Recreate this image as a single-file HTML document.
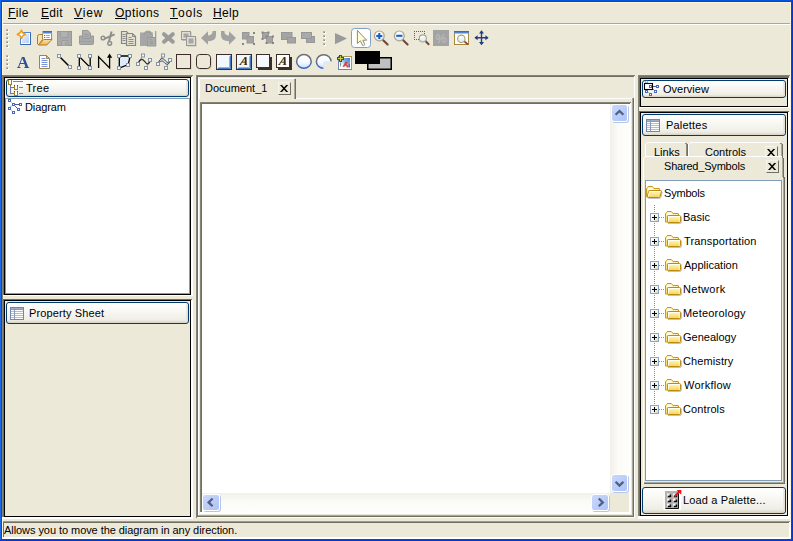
<!DOCTYPE html>
<html>
<head>
<meta charset="utf-8">
<title>Diagram Editor</title>
<style>
html,body{margin:0;padding:0;}
body{width:793px;height:541px;overflow:hidden;background:#ece9d8;position:relative;
 font-family:"Liberation Sans",sans-serif;font-size:11px;color:#000;}
#w{position:absolute;left:0;top:0;width:793px;height:541px;overflow:hidden;background:#ece9d8;}
#w div,#w span,#w svg{position:absolute;}
.t{white-space:nowrap;font:11px/13px "Liberation Sans",sans-serif;color:#000;}
.m{white-space:nowrap;font:12px/14px "Liberation Sans",sans-serif;color:#000;top:6px;}
.m u{text-decoration:none;border-bottom:1px solid #000;display:inline-block;line-height:9px;position:static;}
.g1{background:#858374;}
.g2{background:#716f64;}
.k{background:#000;}
.wh{background:#fff;}
.btn{border:1px solid #003c74;border-radius:3px;box-sizing:border-box;
 background:linear-gradient(#fff 0%,#fdfdfb 15%,#f4f3ee 60%,#eeede5 85%,#e3e0d3 93%,#d6d0c5 100%);}
.btn:after{content:"";position:absolute;right:0;top:1px;bottom:1px;width:2px;background:linear-gradient(90deg,rgba(230,226,212,.5),rgba(220,215,200,.8));}
.sbb{width:17px;height:17px;box-sizing:border-box;border:1px solid #fff;border-radius:3px;background:linear-gradient(135deg,#cbd8fb,#bccdf8 50%,#aec3f5);box-shadow:1px 1px 0 #b5c6ea;}
.lb{border:1px solid #7f9db9;background:#fff;box-sizing:border-box;}
.cb{width:13px;height:13px;box-sizing:border-box;border-top:1px solid #f7f5ea;border-left:1px solid #f7f5ea;border-right:1px solid #716f64;border-bottom:1px solid #716f64;}
</style>
</head>
<body>
<div id="w">

<!-- window frame -->
<div style="left:0;top:0;width:793px;height:1px;background:#0654dc"></div>
<div style="left:0;top:1px;width:793px;height:1px;background:#0342ce"></div>
<div style="left:0;top:0;width:1px;height:541px;background:#1a6aee"></div>
<div style="left:1px;top:1px;width:1px;height:540px;background:#0448d8"></div>
<div style="left:791px;top:1px;width:1px;height:540px;background:#0642e6"></div>
<div style="left:792px;top:0;width:1px;height:541px;background:#0338d2"></div>
<div style="left:1px;top:539px;width:791px;height:1px;background:#0844e6"></div>
<div style="left:0;top:540px;width:793px;height:1px;background:#0338d4"></div>
<div style="left:2px;top:2px;width:1px;height:537px;background:#fdf5d8"></div>
<div style="left:790px;top:2px;width:1px;height:537px;background:#fdf5d8"></div>
<div style="left:2px;top:2px;width:789px;height:1px;background:#fdf5d8"></div>

<!-- menu bar -->
<span class="m" style="left:8px;letter-spacing:.35px"><u>F</u>ile</span>
<span class="m" style="left:41px;letter-spacing:.3px"><u>E</u>dit</span>
<span class="m" style="left:74px;letter-spacing:.8px"><u>V</u>iew</span>
<span class="m" style="left:115px;letter-spacing:.45px"><u>O</u>ptions</span>
<span class="m" style="left:170px;letter-spacing:.75px"><u>T</u>ools</span>
<span class="m" style="left:213px;letter-spacing:.3px"><u>H</u>elp</span>
<div style="left:3px;top:23px;width:787px;height:1px;background:#aca899"></div>
<div style="left:3px;top:24px;width:787px;height:1px;background:#fff"></div>

<!-- TOOLBARS -->
<svg style="left:0;top:25px;opacity:.999" width="793" height="50" viewBox="0 25 793 50">
<defs>
<linearGradient id="gpage" x1="0" y1="0" x2="1" y2="1"><stop offset="0" stop-color="#e6f0fd"/><stop offset="1" stop-color="#b4d0f6"/></linearGradient>
<radialGradient id="gstar"><stop offset="0" stop-color="#fff"/><stop offset=".5" stop-color="#fffbe0"/><stop offset="1" stop-color="#fbc04a"/></radialGradient>
<linearGradient id="gfold" x1="0" y1="0" x2="0" y2="1"><stop offset="0" stop-color="#fbe3a4"/><stop offset="1" stop-color="#eab556"/></linearGradient>
<linearGradient id="glens" x1="0" y1="0" x2="0" y2="1"><stop offset="0" stop-color="#ffffff"/><stop offset="1" stop-color="#dfe6f2"/></linearGradient>
<linearGradient id="gell" x1="0" y1="0" x2="0" y2="1"><stop offset="0" stop-color="#ffffff"/><stop offset=".6" stop-color="#f4f9ff"/><stop offset="1" stop-color="#c4daf8"/></linearGradient>
<linearGradient id="gells" x1="0" y1="0" x2="0" y2="1"><stop offset="0" stop-color="#707070"/><stop offset=".5" stop-color="#5c6c8c"/><stop offset="1" stop-color="#3a6ac6"/></linearGradient>
<linearGradient id="gtitle" x1="0" y1="0" x2="0" y2="1"><stop offset="0" stop-color="#2f62b0"/><stop offset="1" stop-color="#6f9bdc"/></linearGradient>
</defs>
<!-- grips -->
<g fill="#fff"><rect x="7" y="30" width="2" height="2"/><rect x="7" y="34" width="2" height="2"/><rect x="7" y="38" width="2" height="2"/><rect x="7" y="42" width="2" height="2"/><rect x="7" y="46" width="2" height="2"/>
<rect x="7" y="56" width="2" height="2"/><rect x="7" y="60" width="2" height="2"/><rect x="7" y="64" width="2" height="2"/><rect x="7" y="68" width="2" height="2"/>
<rect x="324" y="32" width="2" height="2"/><rect x="324" y="36" width="2" height="2"/><rect x="324" y="40" width="2" height="2"/><rect x="324" y="44" width="2" height="2"/></g>
<g fill="#b6b3a4"><rect x="6" y="29" width="2" height="2"/><rect x="6" y="33" width="2" height="2"/><rect x="6" y="37" width="2" height="2"/><rect x="6" y="41" width="2" height="2"/><rect x="6" y="45" width="2" height="2"/>
<rect x="6" y="55" width="2" height="2"/><rect x="6" y="59" width="2" height="2"/><rect x="6" y="63" width="2" height="2"/><rect x="6" y="67" width="2" height="2"/>
<rect x="323" y="31" width="2" height="2"/><rect x="323" y="35" width="2" height="2"/><rect x="323" y="39" width="2" height="2"/><rect x="323" y="43" width="2" height="2"/></g>
<g fill="#8d8a7b"><rect x="7" y="30" width="1" height="1"/><rect x="7" y="34" width="1" height="1"/><rect x="7" y="38" width="1" height="1"/><rect x="7" y="42" width="1" height="1"/><rect x="7" y="46" width="1" height="1"/><rect x="7" y="56" width="1" height="1"/><rect x="7" y="60" width="1" height="1"/><rect x="7" y="64" width="1" height="1"/><rect x="7" y="68" width="1" height="1"/><rect x="324" y="32" width="1" height="1"/><rect x="324" y="36" width="1" height="1"/><rect x="324" y="40" width="1" height="1"/><rect x="324" y="44" width="1" height="1"/></g>

<!-- new -->
<rect x="20.5" y="32.5" width="10" height="12" fill="#fff" stroke="#5585cc"/>
<rect x="22" y="34" width="7" height="9" fill="url(#gpage)"/>
<path d="M30.5 33V44.5H21" fill="none" stroke="#3a66ac"/>
<path d="M21.400 30.400 Q22 33.800 25.400 34.400 Q22 35 21.400 38.400 Q20.800 35 17.400 34.400 Q20.800 33.800 21.400 30.400 Z" fill="#fffdf0" stroke="#f19c14" stroke-width="1.700" stroke-linejoin="round"/><path d="M21.400 32 Q21.800 34 23.800 34.400 Q21.800 34.800 21.400 36.800 Q21 34.800 19 34.400 Q21 34 21.400 32 Z" fill="#fff"/>
<!-- open -->
<path d="M37.5 44 V36.5 Q37.5 34.5 39.5 34.5 H42.5 V39.5 L38.5 44.8 Z" fill="#f8e2ae" stroke="#b4782c"/>
<path d="M38.5 45 L43.8 39.5 H52 L46.8 45 Z" fill="url(#gfold)" stroke="#b4782c" stroke-linejoin="round"/>
<rect x="42.5" y="31" width="9.5" height="8" fill="#fff"/>
<rect x="42.5" y="31" width="9.5" height="2.6" fill="url(#gtitle)"/>
<path d="M42.5 33.5V39 M51.6 33.5V39" stroke="#a58338" stroke-width="1"/>
<path d="M44 35.5h1.2 M44 37.5h1.2" stroke="#3f6fc2" stroke-width="1"/>
<path d="M46.2 35.5h3.6 M46.2 37.5h3.6" stroke="#8fa6d8" stroke-width="1"/>
<!-- save (disabled) -->
<rect x="57.5" y="31.5" width="14" height="14" fill="#a9a9a9" stroke="#979797"/>
<rect x="60.5" y="31.5" width="7.5" height="6" rx="1" fill="#b1b1b1" stroke="#9c9c9c"/>
<path d="M61.5 45.5V40.5H68V45.5" fill="#b1b1b1" stroke="#9c9c9c"/>
<rect x="65" y="42" width="1.5" height="3" fill="#9c9c9c"/>
<!-- print (disabled) -->
<path d="M79.5 36 H93.5 V43.5 Q93.5 44.5 92.5 44.5 H80.5 Q79.5 44.5 79.5 43.5 Z" fill="#a9a9a9" stroke="#999"/>
<path d="M82.5 38.5 V30.5 H87.8 L90.5 33 V38.5 Z" fill="#adadad" stroke="#999"/>
<path d="M84 34.5h5 M84 36.5h5" stroke="#9a9a9a"/>
<path d="M80 41.5H93" stroke="#9f9f9f"/>
<!-- cut (disabled) -->
<g fill="none" stroke="#8e8e8e">
<circle cx="103" cy="38" r="1.8" stroke-width="1.5"/>
<circle cx="109.700" cy="43.3" r="1.9" stroke-width="1.5"/>
<path d="M104.8 38.6 L114.6 34.4" stroke-width="1.8"/>
<path d="M109 41.2 L111.6 31.4" stroke-width="2"/>
</g>
<!-- copy (disabled) -->
<g fill="#e4e1d1" stroke="#858585" stroke-width="1.2">
<path d="M121.5 31.5 H126.5 L128.5 33.5 V43.5 H121.5 Z"/>
<path d="M126.5 33.5 H132.5 L135.5 36.5 V45.5 H126.5 Z"/>
</g>
<path d="M122.5 34.5h3 M122.5 36.5h3 M122.5 38.5h3 M122.5 40.5h3 M128.5 37.5h3 M128.5 39.5h5 M128.5 41.5h5 M128.5 43.5h5" stroke="#8c8c8c"/>
<path d="M132.5 33.5V36.5H135.5" fill="none" stroke="#8c8c8c"/>
<!-- paste (disabled) -->
<path d="M140 32.5 H144 L146 30.8 H150 L152 32.5 H153 V46 H140 Z" fill="#a6a6a6"/>
<path d="M144.5 34.5 L146.5 32 H149.5 L151.5 34.5" fill="none" stroke="#979797"/>
<rect x="155" y="31" width="1.3" height="15" fill="#a0a0a0"/>
<rect x="147.5" y="37.5" width="8" height="8.5" fill="#ababab" stroke="#989898"/>
<path d="M149.5 39.5h2 M149.5 41.5h4 M149.5 43.5h4" stroke="#979797"/>
<!-- delete (disabled) -->
<path d="M164 34.2 L172.8 41.8 M172.8 34.2 L164 41.8" stroke="#9b9b9b" stroke-width="4" stroke-linecap="round"/>
<!-- duplicate (disabled) -->
<rect x="182" y="32" width="9.5" height="9" fill="#a3a3a3" opacity=".6"/>
<rect x="181.5" y="31.5" width="9" height="8" fill="#e2dfd0" stroke="#989898"/>
<rect x="183.5" y="33.5" width="5" height="4" fill="#a6a6a6"/>
<rect x="187.5" y="37.5" width="9" height="9" fill="#a3a3a3" opacity=".6"/>
<rect x="186.5" y="36.5" width="9" height="9" fill="#e2dfd0" stroke="#989898"/>
<rect x="188.5" y="38.5" width="5" height="5" fill="#a6a6a6"/>
<!-- undo / redo (disabled) -->
<path d="M201 38 L208 31.3 V35.6 Q212.6 35.4 212.6 31 H216 V35 Q216 41.2 208 41.2 V44.7 Z" fill="#a2a2a2"/>
<path d="M236 38 L229 31.3 V35.6 Q224.4 35.4 224.4 31 H221 V35 Q221 41.2 229 41.2 V44.7 Z" fill="#a2a2a2"/>
<!-- group / ungroup (disabled) -->
<g fill="#a4a4a4" stroke="#979797">
<rect x="242.5" y="32.5" width="6.5" height="6.5"/><rect x="247" y="36.5" width="6.5" height="6.5"/>
<rect x="262.5" y="32.5" width="6" height="6"/><rect x="266.5" y="36.5" width="6" height="6.5"/>
<rect x="281.5" y="32.5" width="10.5" height="7"/><rect x="287.5" y="37.5" width="8" height="5.5"/>
<rect x="306.5" y="36.5" width="8" height="6"/><rect x="301.5" y="32.5" width="10" height="6"/>
</g>
<rect x="301.5" y="32.5" width="10" height="6" fill="#a9a9a9" stroke="#979797"/>
<g fill="#858585">
<rect x="253" y="32" width="2" height="2"/><rect x="242" y="43" width="2" height="2"/><rect x="253" y="43" width="2" height="2"/>
<rect x="261.5" y="31.5" width="2" height="2"/><rect x="267.5" y="31.5" width="2" height="2"/><rect x="261.5" y="38" width="2" height="2"/>
<rect x="265.5" y="35.5" width="2" height="2"/><rect x="272" y="35.5" width="2" height="2"/><rect x="265.5" y="42" width="2" height="2"/><rect x="272" y="42" width="2" height="2"/>
</g>
<!-- play (disabled) -->
<path d="M335 33 L347 38.5 L335 44.2 Z" fill="#9a9a9a"/>
<!-- select (toggled) -->
<rect x="351.5" y="28.5" width="19" height="19" rx="3" fill="#fff" stroke="#7f9fc6"/>
<path d="M357.4 30.4 V43.4 L360.4 40.8 L362.6 45.4 Q363.8 46 364.8 44.6 L362.8 40.2 H366.6 Z" fill="#ffffd6" stroke="#8a8a84" stroke-width="1" stroke-linejoin="round"/>
<!-- zoom in -->
<path d="M383.2 40.2 L387.6 44.6" stroke="#6c4a3e" stroke-width="2.1" stroke-linecap="round"/>
<circle cx="379.3" cy="35.9" r="4.9" fill="url(#glens)" stroke="#a9a48e" stroke-width="1.2"/>
<path d="M376.3 35.9h6 M379.3 32.9v6" stroke="#1560c4" stroke-width="2"/>
<!-- zoom out -->
<path d="M403.2 40.2 L407.6 44.6" stroke="#6c4a3e" stroke-width="2.1" stroke-linecap="round"/>
<circle cx="399.3" cy="35.9" r="4.9" fill="url(#glens)" stroke="#a9a48e" stroke-width="1.2"/>
<path d="M396.2 35.8h6.2" stroke="#1560c4" stroke-width="2"/>
<!-- zoom rect -->
<path d="M414 31.5H425 M414.5 31V40 M424.500 31V36 M414 39.5H419" fill="none" stroke="#2d66c8" stroke-width="1" stroke-dasharray="1 1" shape-rendering="crispEdges"/>
<path d="M425.400 41 L428.6 44.200" stroke="#6c4a3e" stroke-width="2" stroke-linecap="round"/>
<circle cx="422.8" cy="38.4" r="3.5" fill="url(#glens)" stroke="#a9a48e" stroke-width="1.1"/>
<path d="M420.800 41 Q422.8 42.2 424.800 41" stroke="#9ccf90" fill="none" stroke-width="1"/>
<!-- percent (disabled) -->
<rect x="433" y="30" width="16" height="16" fill="#a3a3a3"/>
<g opacity=".99"><text x="441" y="42.6" font-family="Liberation Sans,sans-serif" font-size="12.5" font-weight="bold" fill="#b9b9b9" text-anchor="middle">%</text></g>
<!-- fit -->
<rect x="454.5" y="31.5" width="14" height="13" fill="#fff" stroke="#a38a3c"/>
<rect x="454" y="31" width="15" height="2.6" fill="url(#gtitle)"/>
<path d="M464.4 41.4 L467.4 44" stroke="#8c4a3e" stroke-width="1.8" stroke-linecap="round"/>
<circle cx="461.3" cy="38.8" r="3.7" fill="url(#glens)" stroke="#a9a070" stroke-width="1.1"/>
<!-- pan -->
<path d="M481.5 31.500V44 M475.500 37.7H487.500" stroke="#2a3c80" stroke-width="1.4"/>
<path d="M481.5 30.2 L479 33.400 H484 Z M481.5 45.200 L479 42 H484 Z M474.4 37.7 L477.600 35.200 V40.200 Z M488.6 37.7 L485.400 35.200 V40.200 Z" fill="#1e3c7c"/>
<!-- ROW 2 -->
<g opacity=".99"><text x="17" y="67.500" font-family="Liberation Serif,serif" font-size="17" font-weight="bold" fill="#2b4c9b">A</text></g>
<!-- doc -->
<path d="M39.5 55.5 H46.5 L49.5 58.5 V68.5 H39.5 Z" fill="#fff" stroke="#a08446"/>
<path d="M46.5 55.5 V58.5 H49.5 Z" fill="#e8cf90" stroke="#a08446" stroke-linejoin="round"/>
<path d="M41.5 58.5h4 M41.5 60.5h6 M41.5 62.5h6 M41.5 64.5h6 M41.5 66.5h6" stroke="#7d94d6"/>
<!-- line -->
<path d="M59.5 56.5 L70 67" stroke="#000" stroke-width="1.5"/>
<g fill="#f2f7fd" stroke="#8593a4">
<rect x="57.5" y="54.5" width="3" height="3"/><rect x="68.5" y="65.5" width="3" height="3"/>
</g>
<!-- N1 -->
<path d="M79.3 67.5 V56.5 L90.2 67.5 V56.5" fill="none" stroke="#000" stroke-width="1.3"/>
<g fill="#f2f7fd" stroke="#8593a4">
<rect x="77.5" y="54.5" width="3" height="3"/><rect x="88.5" y="54.5" width="3" height="3"/><rect x="77.5" y="66.5" width="3" height="3"/><rect x="88.5" y="66.5" width="3" height="3"/>
</g>
<!-- N2 -->
<path d="M98.6 68 V56.8 L109.6 68 V56" fill="none" stroke="#000" stroke-width="1.3"/>
<path d="M109.6 53.6 L107 57.8 H112.2 Z" fill="#000"/>
<!-- polygon -->
<path d="M119.3 56 H130.2 L128.2 64.6 L119.3 68 Z" fill="#dcecfd" stroke="#000" stroke-width="1.3"/>
<g fill="#f2f7fd" stroke="#8593a4">
<rect x="117.5" y="54.5" width="3" height="3"/><rect x="128.5" y="54.5" width="3" height="3"/><rect x="126.5" y="63.5" width="3" height="3"/><rect x="117.5" y="66.5" width="3" height="3"/>
</g>
<!-- spline 1 -->
<path d="M138 63.5 L143 55.5 M150 60 L146 67.6" stroke="#8d8d8d" stroke-width=".9"/>
<path d="M138.2 63.2 C140 58.5 142.4 58.6 144.6 61.4 S148.2 65.6 150.2 60.4" fill="none" stroke="#333" stroke-width="1.3"/>
<g fill="#f2f7fd" stroke="#8593a4">
<rect x="141.5" y="54" width="3" height="3"/><rect x="148.5" y="58.5" width="3" height="3"/><rect x="136.5" y="62.5" width="3" height="3"/><rect x="144.5" y="66.5" width="3" height="3"/>
</g>
<!-- spline 2 -->
<path d="M158 63.5 L163 55.5 M170 60 L166 67.6" stroke="#8d8d8d" stroke-width=".9"/>
<path d="M158.2 63.6 C160 58 162.6 57.6 164.8 60.2 S168.4 63.8 170.2 59.6 C169.4 65.4 166.4 65 164.4 62.6 S160.4 60.6 158.2 63.6 Z" fill="#dcecfd" stroke="#3a3a3a" stroke-width="1"/>
<g fill="#f2f7fd" stroke="#8593a4">
<rect x="161.5" y="54" width="3" height="3"/><rect x="168.5" y="58.5" width="3" height="3"/><rect x="156.5" y="62.5" width="3" height="3"/><rect x="164.5" y="66.5" width="3" height="3"/>
</g>
<!-- rect -->
<path d="M177.5 69.5H191.5V55.5" fill="none" stroke="#f3d98c"/>
<rect x="176.5" y="54.5" width="14" height="14" fill="none" stroke="#3c2d2a"/>
<!-- round rect -->
<path d="M198.5 69.5H208 Q211.5 69.5 211.5 66V57" fill="none" stroke="#f3d98c"/>
<rect x="196.5" y="54.5" width="14" height="14" rx="3.2" fill="none" stroke="#3c2d2a"/>
<!-- relief rect -->
<rect x="216.5" y="54.5" width="15" height="15" fill="#f0f8fd" stroke="#3c2d2a"/>
<path d="M217.5 68.5H230.5V55.5" fill="none" stroke="#4678be"/>
<path d="M218.5 67.5H229.5V56.5" fill="none" stroke="#8eb2e0"/>
<!-- relief label -->
<rect x="236.5" y="54.5" width="15" height="15" fill="#f0f8fd" stroke="#3c2d2a"/>
<path d="M237.5 68.5H250.5V55.5" fill="none" stroke="#4678be"/>
<path d="M238.5 67.5H249.5V56.5" fill="none" stroke="#8eb2e0"/>
<g opacity=".99"><text x="238.600" y="65" font-family="Liberation Serif,serif" font-size="12" font-style="italic" font-weight="bold" fill="#d2ad52" transform="translate(12 0) skewX(-10)">A</text></g>
<g opacity=".99"><text x="239.200" y="65.300" font-family="Liberation Serif,serif" font-size="12" font-style="italic" font-weight="bold" fill="#3a2c1c" transform="translate(12 0) skewX(-10)">A</text></g>
<!-- shadow rect -->
<rect x="258" y="57" width="14" height="13" fill="#3c2d2a"/>
<rect x="256.500" y="54.5" width="13" height="13" fill="#f4f9fd" stroke="#3c2d2a"/>
<!-- shadow label -->
<rect x="278" y="57" width="14" height="13" fill="#3c2d2a"/>
<rect x="276.5" y="54.5" width="13" height="13" fill="#fdfdfb" stroke="#3c2d2a"/>
<g opacity=".99"><text x="277.600" y="64.600" font-family="Liberation Serif,serif" font-size="12" font-style="italic" font-weight="bold" fill="#d2ad52" transform="translate(12 0) skewX(-10)">A</text></g>
<g opacity=".99"><text x="278.200" y="64.900" font-family="Liberation Serif,serif" font-size="12" font-style="italic" font-weight="bold" fill="#3a2c1c" transform="translate(12 0) skewX(-10)">A</text></g>
<!-- ellipse -->
<ellipse cx="303.900" cy="61.4" rx="7.3" ry="6.8" fill="url(#gell)" stroke="url(#gells)" stroke-width="1.5"/>
<!-- pie -->
<path d="M323.6 61.6 H331 A7.3 6.8 0 1 0 323.600 68.3 Z" fill="url(#gell)"/><path d="M331 61.6 A7.3 6.8 0 1 0 323.600 68.3" fill="none" stroke="url(#gells)" stroke-width="1.5"/><path d="M324 68.500 V62 H331.500" fill="none" stroke="#dbe8fb" stroke-width="1"/>
<!-- image -->
<defs><linearGradient id="gsky" x1="1" y1="0" x2="0" y2="1"><stop offset="0" stop-color="#3f78cc"/><stop offset=".45" stop-color="#8fb6ea"/><stop offset=".7" stop-color="#f4f8fd"/><stop offset="1" stop-color="#fff"/></linearGradient></defs>
<rect x="338.5" y="56.5" width="13" height="13" fill="#fff" stroke="#7284b4"/>
<path d="M339 56.5H351.5V69" fill="none" stroke="#aa9a5c"/>
<rect x="340" y="58" width="10" height="10" fill="url(#gsky)"/>
<path d="M342.600 66.400 L345.800 61 L348.200 62.800 L346.600 64.200 L349 66.800 L347.400 67.400 L345.600 65.400 L344 67 Z" fill="#dc4646"/>
<path d="M348.600 64.200 L349.800 64 L349.900 67 L348.900 67 Z" fill="#55606a"/>
<path d="M340.200 62.500 L341.200 62.500 L341 66.500 L340.300 66.500 Z" fill="#6a7a70"/>
<path d="M340.5 55V62 M337 58.5H344" stroke="#0f6d2c" stroke-width="3"/>
<path d="M340.5 56V61 M338 58.5H343" stroke="#c3d645" stroke-width="1"/>
<!-- colors -->
<rect x="367.75" y="57.75" width="23.5" height="11.5" fill="#c0c0c0" stroke="#000" stroke-width="1.5"/>
<rect x="355" y="51" width="25" height="13" fill="#000"/>
</svg>


<!-- left column -->
<div class="g1" style="left:2px;top:75px;width:191px;height:1px"></div>
<div class="g1" style="left:2px;top:75px;width:1px;height:442px"></div>
<!-- tree panel -->
<div class="g2" style="left:3px;top:76px;width:189px;height:1px"></div>
<div class="g2" style="left:3px;top:76px;width:1px;height:219px"></div>
<div class="wh" style="left:191px;top:77px;width:2px;height:219px"></div>
<div class="wh" style="left:3px;top:295px;width:190px;height:1px"></div>
<div class="k" style="left:4px;top:77px;width:187px;height:218px"></div>
<div style="left:5px;top:78px;width:185px;height:216px;background:#f4f1e4"></div>
<div class="btn" style="left:6px;top:79px;width:183px;height:18px"></div>
<svg style="left:6px;top:79px" width="20" height="18" viewBox="6 79 20 18" shape-rendering="crispEdges">
<path d="M10.5 85V93.5 M10 87.5H14 M10 93.5H14" fill="none" stroke="#6a78b6"/>
<path d="M13 81.500H23 M19 87.5H23 M19 93.5H23" fill="none" stroke="#7886be"/>
<rect x="9" y="80" width="2" height="4" fill="#fff"/><rect x="15" y="86" width="2" height="3" fill="#fff"/><rect x="15" y="92" width="2" height="3" fill="#fff"/>
<path d="M8.5 80V84.500H11.500V80" fill="none" stroke="#a3811f"/>
<path d="M14.500 86V89.500H17.500V86" fill="none" stroke="#a3811f"/>
<path d="M14.500 92V95.500H17.500V92" fill="none" stroke="#a3811f"/>
<rect x="14" y="85" width="1" height="1" fill="#3a4a90"/><rect x="17" y="85" width="1" height="1" fill="#3a4a90"/>
<rect x="14" y="91" width="1" height="1" fill="#3a4a90"/><rect x="17" y="91" width="1" height="1" fill="#3a4a90"/>
</svg>
<span class="t" style="left:26px;top:82px;letter-spacing:.3px">Tree</span>
<div class="lb" style="left:5px;top:98px;width:185px;height:196px"></div>
<svg style="left:6px;top:98px" width="20" height="18" viewBox="6 98 20 18">
<path d="M10.500 101.500 L13 104 M12.500 105.500 L10 107.500 M10.500 109.500 L12.500 111.500" fill="none" stroke="#26304e" stroke-width="1" stroke-dasharray="1 1"/>
<path d="M15 104.500H19 M14.500 105.500 L17.500 108.500" fill="none" stroke="#4a5c9c" stroke-width="1"/>
<g fill="#fff" stroke="#4a68b8" shape-rendering="crispEdges">
<rect x="8.500" y="99.500" width="2" height="2"/><rect x="12.500" y="103.500" width="2" height="2"/><rect x="19.500" y="103.500" width="2" height="2"/>
<rect x="8.500" y="107.500" width="2" height="2"/><rect x="17.500" y="108.500" width="2" height="2"/><rect x="12.500" y="111.500" width="2" height="2"/>
</g></svg>
<span class="t" style="left:25px;top:101px;letter-spacing:-.1px">Diagram</span>
<!-- property panel -->
<div class="g2" style="left:3px;top:299px;width:189px;height:1px"></div>
<div class="g2" style="left:3px;top:299px;width:1px;height:218px"></div>
<div class="wh" style="left:191px;top:300px;width:2px;height:219px"></div>
<div class="wh" style="left:2px;top:517px;width:191px;height:2px"></div>
<div class="k" style="left:4px;top:300px;width:187px;height:217px"></div>
<div style="left:5px;top:301px;width:185px;height:215px;background:#ece9d8"></div>
<div class="btn" style="left:6px;top:302px;width:183px;height:22px"></div>
<svg style="left:10px;top:307px" width="14" height="13" viewBox="0 0 14 13" shape-rendering="crispEdges">
<rect x="0" y="0" width="14" height="13" fill="#7686aa"/>
<rect x="1" y="1" width="12" height="2" fill="#8e9aba"/>
<rect x="1" y="1" width="12" height="1" fill="#a2acc8"/>
<rect x="1" y="3" width="12" height="9" fill="#b4bcd2"/>
<g fill="#fff"><rect x="1" y="3" width="3" height="1"/><rect x="5" y="3" width="8" height="1"/><rect x="1" y="5" width="3" height="1"/><rect x="5" y="5" width="8" height="1"/><rect x="1" y="7" width="3" height="1"/><rect x="5" y="7" width="8" height="1"/><rect x="1" y="9" width="3" height="1"/><rect x="5" y="9" width="8" height="1"/><rect x="1" y="11" width="3" height="1"/><rect x="5" y="11" width="8" height="1"/></g>
<rect x="4" y="1" width="1" height="11" fill="#8c98b8"/>
</svg>
<span class="t" style="left:29px;top:307px;letter-spacing:.12px">Property Sheet</span>

<!-- center -->
<div class="g1" style="left:196px;top:75px;width:439px;height:1px"></div>
<div class="g2" style="left:196px;top:76px;width:438px;height:1px"></div>
<div class="g1" style="left:196px;top:75px;width:1px;height:443px"></div>
<div class="g2" style="left:197px;top:76px;width:1px;height:441px"></div>
<div class="wh" style="left:198px;top:77px;width:1px;height:439px"></div>
<div class="wh" style="left:634px;top:77px;width:1px;height:441px"></div>
<div class="wh" style="left:198px;top:517px;width:437px;height:1px"></div>
<div style="left:198px;top:515px;width:436px;height:1px;background:#aca899"></div>
<div class="g2" style="left:198px;top:516px;width:436px;height:1px"></div>
<div style="left:632px;top:98px;width:1px;height:418px;background:#aca899"></div>
<div class="g2" style="left:633px;top:98px;width:1px;height:419px"></div>
<!-- tab -->
<div class="wh" style="left:296px;top:98px;width:336px;height:1px"></div>
<div class="wh" style="left:200px;top:78px;width:94px;height:1px"></div>
<div class="wh" style="left:199px;top:79px;width:1px;height:20px"></div>
<div style="left:294px;top:79px;width:1px;height:20px;background:#aca899"></div>
<div class="g2" style="left:295px;top:79px;width:1px;height:20px"></div>
<span class="t" style="left:205px;top:82px">Document_1</span>
<div class="cb" style="left:278px;top:82px"></div>
<svg style="left:280px;top:85px" width="9" height="7" viewBox="0 0 9 7"><path d="M0 0 H2 L8.200 7 H6.200 Z M6.200 0 H8.200 L2 7 H0 Z" fill="#000"/></svg>
<!-- canvas -->
<div style="left:200px;top:102px;width:431px;height:412px;background:#fff"></div>
<div style="left:200px;top:102px;width:431px;height:1px;background:#858374"></div>
<div style="left:200px;top:102px;width:1px;height:410px;background:#858374"></div>
<div class="g2" style="left:201px;top:103px;width:429px;height:1px"></div>
<div class="g2" style="left:201px;top:103px;width:1px;height:409px"></div>
<div style="left:610px;top:104px;width:19px;height:389px;background:linear-gradient(90deg,#f1efe8,#fafaf6 40%,#fefefc)"></div>
<div style="left:202px;top:493px;width:408px;height:19px;background:linear-gradient(#f1efe8,#fafaf6 40%,#fefefc)"></div>
<div style="left:610px;top:493px;width:19px;height:19px;background:#ece9d8"></div>
<div class="sbb" style="left:611px;top:104px;height:18px"></div>
<div class="sbb" style="left:611px;top:474px;height:18px"></div>
<div class="sbb" style="left:202px;top:494px;width:18px"></div>
<div class="sbb" style="left:591px;top:494px;width:18px"></div>
<svg style="left:611px;top:103.500px" width="17" height="17" viewBox="0 0 17 17"><path d="M4.600 10.800 L8.500 7 L12.400 10.800" fill="none" stroke="#4d6185" stroke-width="2.300"/></svg>
<svg style="left:611px;top:475px" width="17" height="17" viewBox="0 0 17 17"><path d="M4.600 6.800 L8.500 10.600 L12.400 6.800" fill="none" stroke="#4d6185" stroke-width="2.300"/></svg>
<svg style="left:202px;top:494px" width="17" height="17" viewBox="0 0 17 17"><path d="M10.600 4.500 L6.600 8.400 L10.600 12.300" fill="none" stroke="#4d6185" stroke-width="2.300"/></svg>
<svg style="left:591px;top:494px" width="17" height="17" viewBox="0 0 17 17"><path d="M7.800 4.500 L11.800 8.400 L7.800 12.300" fill="none" stroke="#4d6185" stroke-width="2.300"/></svg>

<!-- right column -->
<div class="g1" style="left:638px;top:75px;width:152px;height:1px"></div>
<div class="g1" style="left:638px;top:75px;width:1px;height:441px"></div>
<!-- overview -->
<div class="g2" style="left:639px;top:76px;width:150px;height:2px"></div>
<div class="g2" style="left:639px;top:76px;width:1px;height:31px"></div>
<div class="wh" style="left:788px;top:78px;width:2px;height:30px"></div>
<div class="wh" style="left:639px;top:107px;width:151px;height:1px"></div>
<div class="k" style="left:640px;top:78px;width:148px;height:29px"></div>
<div style="left:641px;top:79px;width:146px;height:27px;background:#ece9d8"></div>
<div class="btn" style="left:642px;top:80px;width:144px;height:18px"></div>
<svg style="left:642px;top:80px" width="20" height="18" viewBox="642 80 20 18">
<path d="M647.500 91.500 L650 94 M651.500 87.500 L655 91" fill="none" stroke="#26304e" stroke-width="1" stroke-dasharray="1 1"/>
<path d="M652 86.500H656" stroke="#4a5c9c"/>
<g fill="#fff" stroke="#4a68b8" shape-rendering="crispEdges">
<rect x="645.500" y="80.500" width="2" height="2" stroke-opacity=".45"/><rect x="645.500" y="90.500" width="2" height="2"/>
</g>
<rect x="644.500" y="83.500" width="8" height="6" fill="#fff" stroke="#000" stroke-width="1.100"/>
<g fill="#fff" stroke="#4a68b8" shape-rendering="crispEdges">
<rect x="649.500" y="85.500" width="2" height="2"/><rect x="656.500" y="85.500" width="2" height="2"/>
<rect x="654.500" y="90.500" width="2" height="2"/><rect x="649.500" y="93.500" width="2" height="2"/>
</g></svg>
<span class="t" style="left:663px;top:83px">Overview</span>
<!-- palettes -->
<div class="g2" style="left:639px;top:111px;width:150px;height:1px"></div>
<div class="g2" style="left:639px;top:111px;width:1px;height:405px"></div>
<div class="wh" style="left:788px;top:112px;width:2px;height:407px"></div>
<div class="wh" style="left:638px;top:516px;width:152px;height:3px"></div>
<div class="k" style="left:640px;top:112px;width:148px;height:404px"></div>
<div style="left:641px;top:113px;width:146px;height:402px;background:#ece9d8"></div>
<div class="btn" style="left:642px;top:114px;width:144px;height:22px"></div>
<svg style="left:646px;top:119px" width="14" height="13" viewBox="0 0 14 13" shape-rendering="crispEdges">
<rect x="0" y="0" width="14" height="13" fill="#7686aa"/>
<rect x="1" y="1" width="12" height="2" fill="#8e9aba"/>
<rect x="1" y="1" width="12" height="1" fill="#a2acc8"/>
<rect x="1" y="3" width="12" height="9" fill="#b4bcd2"/>
<g fill="#fff"><rect x="1" y="3" width="3" height="1"/><rect x="5" y="3" width="8" height="1"/><rect x="1" y="5" width="3" height="1"/><rect x="5" y="5" width="8" height="1"/><rect x="1" y="7" width="3" height="1"/><rect x="5" y="7" width="8" height="1"/><rect x="1" y="9" width="3" height="1"/><rect x="5" y="9" width="8" height="1"/><rect x="1" y="11" width="3" height="1"/><rect x="5" y="11" width="8" height="1"/></g>
<rect x="4" y="1" width="1" height="11" fill="#8c98b8"/>
</svg>
<span class="t" style="left:666px;top:119px;letter-spacing:.2px">Palettes</span>
<div class="wh" style="left:647px;top:142px;width:38px;height:1px"></div>
<div class="wh" style="left:646px;top:143px;width:1px;height:1px"></div>
<div class="wh" style="left:645px;top:144px;width:1px;height:12px"></div>
<div style="left:686px;top:144px;width:1px;height:12px;background:#8f8c7e"></div>
<div class="g2" style="left:687px;top:144px;width:1px;height:12px"></div>
<div style="left:685px;top:143px;width:2px;height:1px;background:#8f8c7e"></div>
<div class="wh" style="left:690px;top:142px;width:90px;height:1px"></div>
<div class="wh" style="left:689px;top:143px;width:1px;height:1px"></div>
<div class="wh" style="left:688px;top:144px;width:1px;height:12px"></div>
<div style="left:781px;top:144px;width:1px;height:14px;background:#aca899"></div>
<div class="g2" style="left:782px;top:144px;width:1px;height:14px"></div>
<div style="left:780px;top:143px;width:2px;height:1px;background:#8f8c7e"></div>
<span class="t" style="left:654px;top:146px">Links</span>
<span class="t" style="left:705px;top:146px">Controls</span>
<div class="cb" style="left:765px;top:146px;height:10px;border-bottom:none"></div>
<svg style="left:767px;top:149px" width="9" height="7" viewBox="0 0 9 7"><path d="M0 0 H2 L8.200 7 H6.200 Z M6.200 0 H8.200 L2 7 H0 Z" fill="#000"/></svg>
<!-- selected tab + content -->
<div style="left:644px;top:157px;width:138px;height:325px;background:#ece9d8"></div>
<div class="wh" style="left:645px;top:156px;width:137px;height:1px"></div>
<div class="wh" style="left:644px;top:157px;width:1px;height:1px"></div>
<div class="wh" style="left:643px;top:158px;width:1px;height:326px"></div>
<div style="left:782px;top:158px;width:1px;height:19px;background:#aca899"></div>
<div class="g2" style="left:783px;top:158px;width:1px;height:20px"></div>
<div style="left:783px;top:178px;width:1px;height:305px;background:#aca899"></div>
<div class="g2" style="left:784px;top:177px;width:1px;height:307px"></div>
<div style="left:644px;top:482px;width:140px;height:1px;background:#aca899"></div>
<div class="g2" style="left:644px;top:483px;width:141px;height:1px"></div>
<span class="t" style="left:664px;top:160px;letter-spacing:-.2px">Shared_Symbols</span>
<div class="cb" style="left:766px;top:160px"></div>
<svg style="left:768px;top:163px" width="9" height="7" viewBox="0 0 9 7"><path d="M0 0 H2 L8.200 7 H6.200 Z M6.200 0 H8.200 L2 7 H0 Z" fill="#000"/></svg>
<div class="lb" style="left:645px;top:180px;width:137px;height:301px"></div>
<svg style="left:645px;top:180px" width="137" height="301" viewBox="645 180 137 301">
<defs>
<linearGradient id="gfc" x1="0" y1="0" x2="0" y2="1"><stop offset="0" stop-color="#fff9c8"/><stop offset=".5" stop-color="#fde98c"/><stop offset="1" stop-color="#f6d04e"/></linearGradient>
<linearGradient id="gpm" x1="0" y1="0" x2="1" y2="1"><stop offset="0" stop-color="#ffffff"/><stop offset=".6" stop-color="#f4f2ec"/><stop offset="1" stop-color="#cfcabb"/></linearGradient>
<g id="fclosed">
<path d="M3 12.400 H15 Q16.300 12.400 16.300 11.200 V5.500" fill="none" stroke="#50506e" stroke-opacity=".4" stroke-width="1"/>
<path d="M.500 11 V2.800 L1.500 1.500 L2.300 .500 H6.300 L7.300 1.500 L8 2.500 H13 Q13.500 2.500 13.500 3 V11 Z" fill="#fae27e" stroke="#c8991e"/>
<path d="M1.500 3.500 V2.800 L2.600 1.500 H6 L7 2.600 L7.600 3.500 H12.500 V4 H1.500 Z" fill="#fffdf0"/>
<rect x="2.500" y="4.500" width="13" height="7" rx="1" fill="url(#gfc)" stroke="#bd8a12"/>
<path d="M3.500 10.500 V5.500 H14.500" fill="none" stroke="#fffef4" stroke-width="1"/>
<path d="M14.200 6 V10.800" stroke="#fff9d0" stroke-width=".8"/>
</g>
<g id="fopen">
<path d="M2.500 12.400 H13.300 Q14.400 12.400 14.800 11.300 L16.200 6" fill="none" stroke="#50506e" stroke-opacity=".4" stroke-width="1"/>
<path d="M.500 10.500 V2.800 L1.500 1.500 L2.300 .500 H6.300 L7.300 1.500 L8 2.500 H13 Q13.500 2.500 13.500 3 V5 L2 11 Z" fill="#fae27e" stroke="#c8991e"/>
<path d="M1.500 3.500 V2.800 L2.600 1.500 H6 L7 2.600 L7.600 3.500 H12.500 V4 H1.500 Z" fill="#fffdf0"/>
<path d="M3.600 4.500 H14.600 Q15.700 4.500 15.400 5.500 L14.100 10.500 Q13.800 11.500 12.800 11.500 H1.800 Q.900 11.500 1.200 10.600 L2.600 5.400 Q2.900 4.500 3.600 4.500 Z" fill="url(#gfc)" stroke="#bd8a12"/>
<path d="M2.400 10.300 L3.700 5.500 H14.300" fill="none" stroke="#fffef4" stroke-width="1"/>
</g>
<g id="pm" shape-rendering="crispEdges">
<rect x=".5" y=".5" width="8" height="8" rx="1" fill="url(#gpm)" stroke="#8ea4c2"/>
<path d="M2 4.500H7 M4.500 2V7" stroke="#000" stroke-width="1"/>
</g>
</defs>
<path d="M654.500 205V410" stroke="#8a8a8a" stroke-width="1" stroke-dasharray="1 1" shape-rendering="crispEdges"/>
<use href="#fopen" x="646" y="186"/>
<path d="M659 217.500H665" stroke="#8a8a8a" stroke-width="1" stroke-dasharray="1 1" shape-rendering="crispEdges"/>
<use href="#pm" x="650" y="213"/>
<use href="#fclosed" x="665" y="211"/>
<path d="M659 241.500H665" stroke="#8a8a8a" stroke-width="1" stroke-dasharray="1 1" shape-rendering="crispEdges"/>
<use href="#pm" x="650" y="237"/>
<use href="#fclosed" x="665" y="235"/>
<path d="M659 265.500H665" stroke="#8a8a8a" stroke-width="1" stroke-dasharray="1 1" shape-rendering="crispEdges"/>
<use href="#pm" x="650" y="261"/>
<use href="#fclosed" x="665" y="259"/>
<path d="M659 289.500H665" stroke="#8a8a8a" stroke-width="1" stroke-dasharray="1 1" shape-rendering="crispEdges"/>
<use href="#pm" x="650" y="285"/>
<use href="#fclosed" x="665" y="283"/>
<path d="M659 313.500H665" stroke="#8a8a8a" stroke-width="1" stroke-dasharray="1 1" shape-rendering="crispEdges"/>
<use href="#pm" x="650" y="309"/>
<use href="#fclosed" x="665" y="307"/>
<path d="M659 337.500H665" stroke="#8a8a8a" stroke-width="1" stroke-dasharray="1 1" shape-rendering="crispEdges"/>
<use href="#pm" x="650" y="333"/>
<use href="#fclosed" x="665" y="331"/>
<path d="M659 361.500H665" stroke="#8a8a8a" stroke-width="1" stroke-dasharray="1 1" shape-rendering="crispEdges"/>
<use href="#pm" x="650" y="357"/>
<use href="#fclosed" x="665" y="355"/>
<path d="M659 385.500H665" stroke="#8a8a8a" stroke-width="1" stroke-dasharray="1 1" shape-rendering="crispEdges"/>
<use href="#pm" x="650" y="381"/>
<use href="#fclosed" x="665" y="379"/>
<path d="M659 409.500H665" stroke="#8a8a8a" stroke-width="1" stroke-dasharray="1 1" shape-rendering="crispEdges"/>
<use href="#pm" x="650" y="405"/>
<use href="#fclosed" x="665" y="403"/>
</svg>
<span class="t" style="left:664px;top:187px;letter-spacing:-.2px">Symbols</span>
<span class="t" style="left:683px;top:211px">Basic</span>
<span class="t" style="left:684px;top:235px;letter-spacing:0.15px">Transportation</span>
<span class="t" style="left:684px;top:259px">Application</span>
<span class="t" style="left:683px;top:283px;letter-spacing:0.3px">Network</span>
<span class="t" style="left:683px;top:307px;letter-spacing:0.2px">Meteorology</span>
<span class="t" style="left:683px;top:331px">Genealogy</span>
<span class="t" style="left:683px;top:355px;letter-spacing:0.1px">Chemistry</span>
<span class="t" style="left:684px;top:379px;letter-spacing:0.25px">Workflow</span>
<span class="t" style="left:683px;top:403px;letter-spacing:0.1px">Controls</span>
<div class="btn" style="left:642px;top:487px;width:144px;height:27px"></div>
<svg style="left:663px;top:489px" width="20" height="22" viewBox="663 489 20 22">
<rect x="663.500" y="489.500" width="17.500" height="20.500" fill="#fff"/>
<rect x="665" y="491" width="14" height="18" fill="#b2b2b2"/>
<path d="M678.500 492V508.500H665.500" fill="none" stroke="#111"/>
<g fill="#0a0a0a"><rect x="668" y="494.5" width="3.200" height="2.700"/><rect x="668" y="499.5" width="3.200" height="2.700"/><rect x="668" y="504.5" width="3.200" height="2.700"/><rect x="674" y="494.5" width="3.200" height="2.700"/><rect x="674" y="499.5" width="3.200" height="2.700"/><rect x="674" y="504.5" width="3.200" height="2.700"/></g>
<g fill="#f2f2f2"><rect x="667" y="493.5" width="2.600" height="2.200"/><rect x="667" y="498.5" width="2.600" height="2.200"/><rect x="667" y="503.5" width="2.600" height="2.200"/><rect x="673" y="493.5" width="2.600" height="2.200"/><rect x="673" y="498.5" width="2.600" height="2.200"/><rect x="673" y="503.5" width="2.600" height="2.200"/></g>
<path d="M674.500 496.500 L680 491" stroke="#f0101c" stroke-width="2"/>
<path d="M676.500 490 H681.300 V494.800 Z" fill="#f0101c"/>
</svg>
<span class="t" style="left:683px;top:494px;letter-spacing:.15px">Load a Palette...</span>

<!-- status bar -->
<div style="left:3px;top:521px;width:787px;height:1px;background:#9d9a8b"></div>
<div class="g2" style="left:3px;top:522px;width:786px;height:1px"></div>
<div class="g2" style="left:3px;top:522px;width:1px;height:15px"></div>
<div class="wh" style="left:3px;top:537px;width:788px;height:2px"></div>
<div class="wh" style="left:789px;top:522px;width:2px;height:17px"></div>
<span class="t" style="left:4px;top:524px;letter-spacing:-.06px">Allows you to move the diagram in any direction.</span>

</div>
</body>
</html>
